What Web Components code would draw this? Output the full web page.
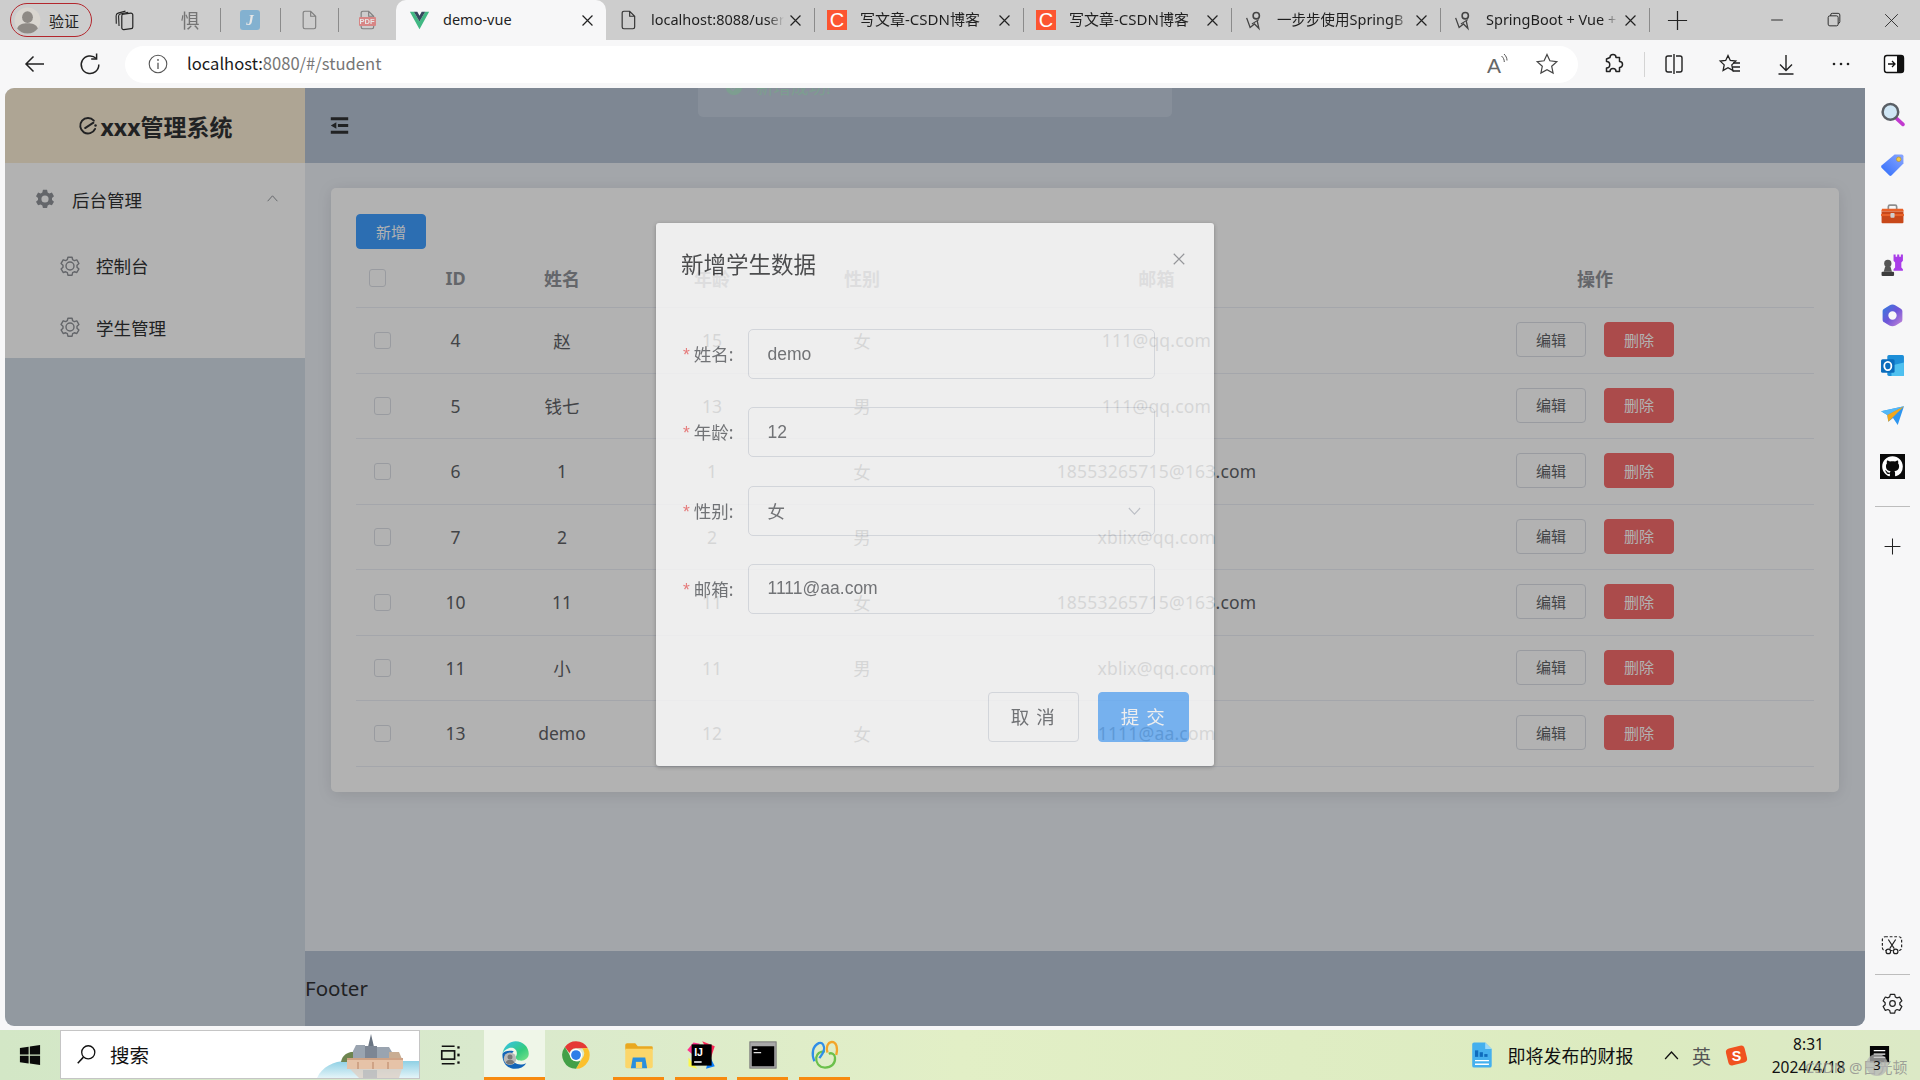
<!DOCTYPE html>
<html lang="zh"><head><meta charset="utf-8"><title>demo-vue</title>
<style>
html,body{margin:0;padding:0;width:1920px;height:1080px;overflow:hidden;background:#f7f7f8}
body{display:flex;flex-direction:column;font-family:"Noto Sans","Noto Sans CJK SC",sans-serif;color:#1a1a1a}
#mid{display:flex;height:938px;flex:none}
#gap{height:4px;flex:none}
</style></head>
<body>
<browser-tabs></browser-tabs>
<browser-toolbar></browser-toolbar>
<div id="mid">
  <admin-app>
    <admin-sidebar slot="aside"></admin-sidebar>
    <admin-header slot="header"></admin-header>
    <student-card slot="main"></student-card>
    <student-dialog slot="overlay"></student-dialog>
  </admin-app>
  <side-panel></side-panel>
</div>
<div id="gap"></div>
<win-taskbar></win-taskbar>
<script>
const ICONS={
back:['0 0 24 24','<path d="M21 12H3M10.5 4.5 3 12l7.5 7.5" fill="none" stroke="#222" stroke-width="1.5"/>'],
reload:['0 0 24 24','<path d="M18.2 6.5A8.8 8.8 0 1 0 20.8 12.5" fill="none" stroke="#222" stroke-width="1.5"/><path d="M18.6 1.5v5.4h-5.4" fill="none" stroke="#222" stroke-width="1.5"/>'],
info:['0 0 24 24','<circle cx="12" cy="12" r="9.6" fill="none" stroke="#555" stroke-width="1.2"/><path d="M12 10.5v7" stroke="#555" stroke-width="1.4"/><circle cx="12" cy="7.5" r="1" fill="#555"/>'],
read:['0 0 24 24','<text x="1" y="20.500" font-family="Liberation Sans" font-size="21" fill="#666">A</text><path d="M15.500 4c1.800 1.500 2.800 3.500 2.800 6M18 2c2 2 3 4 3 6.500" fill="none" stroke="#555"/>'],
star:['0 0 24 24','<path d="M12 2.500l2.900 6.300 6.900.8-5.100 4.700 1.400 6.800-6.100-3.400-6.100 3.400 1.400-6.800L2.200 9.600l6.900-.8z" fill="none" stroke="#444" stroke-width="1.200"/>'],
ext:['0 0 24 24','<path d="M9 5.500a3 3 0 0 1 6 0h3.500v4a3 3 0 0 1 0 6v4H15a3 3 0 0 0-6 0H5.500v-3.500a3 3 0 0 0 0-6.500V7z" fill="none" stroke="#222" stroke-width="1.500" stroke-linejoin="round"/>'],
split:['0 0 24 24','<path d="M10 4H6a2 2 0 0 0-2 2v12a2 2 0 0 0 2 2h4M14 4h4a2 2 0 0 1 2 2v12a2 2 0 0 1-2 2h-4" fill="none" stroke="#222" stroke-width="1.400"/><path d="M12 2v20" stroke="#222" stroke-width="1.400"/>'],
fav:['0 0 24 24','<path d="M10 3.500l2.300 5 5.500.6-4 3.800 1.100 5.500-4.900-2.700-4.900 2.700 1.100-5.500-4-3.800 5.500-.6z" fill="none" stroke="#222" stroke-width="1.300"/><path d="M15 11h7M14.500 15h7.500M14.500 19h7.500" stroke="#222" stroke-width="1.300"/>'],
down:['0 0 24 24','<path d="M12 3v15M6 12.500l6 6 6-6M4.500 22h15" fill="none" stroke="#222" stroke-width="1.400"/>'],
more:['0 0 24 24','<circle cx="5" cy="12" r="1.300" fill="#222"/><circle cx="12" cy="12" r="1.300" fill="#222"/><circle cx="19" cy="12" r="1.300" fill="#222"/>'],
sidebar:['0 0 24 24','<rect x="2.500" y="3.500" width="19" height="17" rx="2.500" fill="#fff" stroke="#111" stroke-width="1.400"/><path d="M15 3.500h4a2.500 2.500 0 0 1 2.500 2.500v12a2.500 2.500 0 0 1-2.500 2.500h-4z" fill="#111"/><path d="M6 12h6M10 9l3 3-3 3" fill="none" stroke="#111" stroke-width="1.300"/>'],
tabs:['0 0 24 24','<path d="M8.500 7.500a2 2 0 0 1 1.800-2l8-1a2 2 0 0 1 2.200 2v13a2 2 0 0 1-1.800 2l-8 1a2 2 0 0 1-2.200-2z" fill="none" stroke="#222" stroke-width="1.300"/><path d="M5.500 18.500 5 8a2.500 2.500 0 0 1 2-2.500L15.500 3.500M2.500 16 2.300 7.500A3 3 0 0 1 4.500 4.500l8-2.200" fill="none" stroke="#222" stroke-width="1.200"/>'],
doc:['0 0 24 24','<path d="M5 3.500a2 2 0 0 1 2-2h7l6 6v13a2 2 0 0 1-2 2H7a2 2 0 0 1-2-2zM14 1.500v6h6" fill="none" stroke="#333" stroke-width="1.400"/>'],
vue:['0 0 24 24','<path d="M1 2h4.500L12 13 18.500 2H23L12 22z" fill="#41b883"/><path d="M5.500 2H9.500L12 6.500 14.500 2h4L12 13z" fill="#35495e"/>'],
person:['0 0 24 24','<circle cx="12" cy="12" r="11.500" fill="#d9d6d0"/><ellipse cx="12" cy="9" rx="4.800" ry="5.300" fill="#8e8a85"/><path d="M2.800 19c1.500-3.500 5-4.500 9.200-4.500s7.700 1 9.200 4.500c-2 2.800-5.300 4.500-9.200 4.500S4.800 21.800 2.800 19z" fill="#8e8a85"/>'],
bird:['0 0 24 24','<path d="M3 9l4 11 5-4 5 5-2-9" fill="none" stroke="#444" stroke-width="1.500"/><circle cx="14" cy="6.500" r="3.600" fill="none" stroke="#444" stroke-width="1.800"/><path d="M9 16l8-5" stroke="#444" stroke-width="1.200"/>'],
x:['0 0 24 24','<path d="M5 5l14 14M19 5 5 19" stroke="#222" stroke-width="1.700"/>'],
xthin:['0 0 24 24','<path d="M4 4l16 16M20 4 4 20" stroke="#222" stroke-width="1.100"/>'],
xd:['0 0 24 24','<path d="M3 3l18 18M21 3 3 21" stroke="#8d8f94" stroke-width="2"/>'],
plus:['0 0 24 24','<path d="M12 2v20M2 12h20" stroke="#222" stroke-width="1.300"/>'],
min:['0 0 24 24','<path d="M5 12h14" stroke="#222" stroke-width="1.100"/>'],
max:['0 0 24 24','<rect x="5" y="7" width="12" height="12" rx="2" fill="none" stroke="#222" stroke-width="1.100"/><path d="M8 7V6a2 2 0 0 1 2-2h7a2 2 0 0 1 2 2v8a2 2 0 0 1-2 2" fill="none" stroke="#222" stroke-width="1.100"/>'],
eleme:['0 0 24 24','<path d="M20.500 15.500A9.300 9.300 0 1 1 19 5.600" fill="none" stroke="#303133" stroke-width="2.300" stroke-linecap="round"/><path d="M8.500 14.500 18.500 8" stroke="#303133" stroke-width="2.300" stroke-linecap="round"/><circle cx="21" cy="11.500" r="1.500" fill="#303133"/>'],
fold:['0 0 24 24','<path d="M1 1.500h22v4H1zM10 10h13v4H10zM1 18.500h22v4H1zM8 8v8L1 12z" fill="#303133"/>'],
gearfill:['0 0 24 24','<path fill-rule="evenodd" fill="#909399" d="M9.500 1h5l.7 3.200 2 1.100 3.100-1 2.500 4.300-2.400 2.200v2.300l2.400 2.200-2.500 4.300-3.100-1-2 1.100-.7 3.200h-5l-.7-3.200-2-1.100-3.100 1L1.200 15.300l2.400-2.200v-2.300L1.200 8.600l2.500-4.300 3.100 1 2-1.100zM12 7.700a4.300 4.300 0 1 0 0 8.600 4.300 4.300 0 0 0 0-8.600z"/>'],
gear:['0 0 24 24','<path fill="none" stroke="#909399" stroke-width="1.700" stroke-linejoin="round" d="M9.500 1.500h5l.7 3 2 1.100 3-.9 2.500 4.300-2.300 2.100v2.300l2.300 2.100-2.500 4.300-3-.9-2 1.100-.7 3h-5l-.7-3-2-1.100-3 .9-2.500-4.300 2.300-2.100v-2.300L1.300 8.900l2.500-4.300 3 .9 2-1.100z"/><circle cx="12" cy="12" r="4.800" fill="none" stroke="#909399" stroke-width="1.700"/>'],
gearblack:['0 0 24 24','<path fill="none" stroke="#222" stroke-width="1.400" stroke-linejoin="round" d="M9.500 1.500h5l.7 3 2 1.100 3-.9 2.500 4.300-2.300 2.100v2.300l2.300 2.100-2.500 4.300-3-.9-2 1.100-.7 3h-5l-.7-3-2-1.100-3 .9-2.500-4.300 2.300-2.100v-2.300L1.300 8.900l2.500-4.300 3 .9 2-1.100z"/><circle cx="12" cy="12" r="3.200" fill="none" stroke="#222" stroke-width="1.400"/>'],
up:['0 0 24 24','<path d="M3 17 12 7l9 10" fill="none" stroke="#909399" stroke-width="1.800"/>'],
downc:['0 0 24 24','<path d="M3 8l9 10 9-10" fill="none" stroke="#c0c4cc" stroke-width="1.800"/>'],
check:['0 0 24 24','<circle cx="12" cy="12" r="11" fill="#7d9e90"/><path d="M6.500 12.500l4 4 7-8" fill="none" stroke="#8a949d" stroke-width="2"/>'],
mag:['0 0 24 24','<path d="M15 15l7 6.500" stroke="#c23ad0" stroke-width="3.500" stroke-linecap="round"/><circle cx="10" cy="9.500" r="7.500" fill="#cfe6f5" stroke="#5a5f66" stroke-width="2.400"/>'],
tag:['0 0 24 24','<defs><linearGradient id="tg" x1="0" y1="1" x2="1" y2="0"><stop offset="0" stop-color="#2f6dfb"/><stop offset="1" stop-color="#8aa6ff"/></linearGradient></defs><path d="M14 2.500h7a1.500 1.500 0 0 1 1.500 1.500v7L11 22.500a1.500 1.500 0 0 1-2 0L1.500 15a1.500 1.500 0 0 1 0-2z" fill="url(#tg)"/><circle cx="18" cy="7" r="2.200" fill="#f2c94c" stroke="#b69323" stroke-width=".6"/>'],
box:['0 0 24 24','<path d="M8 7V4.500a1.500 1.500 0 0 1 1.500-1.500h5A1.500 1.500 0 0 1 16 4.500V7" fill="none" stroke="#8e8e8e" stroke-width="1.600"/><path d="M1 9l1-2.500h20l1 2.500z" fill="#e8622a"/><rect x="1.500" y="9" width="21" height="11.500" rx="1" fill="#c8481a"/><rect x="1" y="11.500" width="22" height="2" fill="#e8622a"/><rect x="10" y="10.500" width="4" height="4.500" rx=".8" fill="#cfcfcf"/>'],
chess:['0 0 24 24','<circle cx="7.500" cy="10" r="3.500" fill="#565656"/><path d="M5 13h5l1.500 5h-8z" fill="#565656"/><rect x="1.500" y="18" width="12" height="4" rx="1" fill="#3d3d3d"/><path d="M13 1.500h2v2h1.500v-2h2v2H20v-2h2v6l-1.500 1.500v5l1.500 1.500v1.500h-9V15.500l1.500-1.500V9L13 7.500z" fill="#a93de8"/>'],
m365:['0 0 24 24','<defs><linearGradient id="mg" x1="0" y1="0" x2="1" y2="1"><stop offset="0" stop-color="#2f7fe0"/><stop offset=".5" stop-color="#6e55d8"/><stop offset="1" stop-color="#c888d8"/></linearGradient></defs><path fill-rule="evenodd" d="M12 1.500c1 0 2 .5 3 1l5 3c1 .6 1.500 1.500 1.500 2.500v8c0 1-.5 2-1.500 2.500l-5 3c-2 1-4 1-6 0l-5-3c-1-.5-1.500-1.500-1.500-2.500V8c0-1 .5-2 1.500-2.500l5-3c1-.5 2-1 3-1zM12 8a4 4 0 1 0 0 8 4 4 0 0 0 0-8z" fill="url(#mg)"/>'],
outlook:['0 0 24 24','<rect x="7" y="2" width="16" height="20" rx="1.500" fill="#1d8fd8"/><path d="M11 12l12-3v13H11z" fill="#4fc1f0"/><rect x="1" y="6" width="13" height="13" rx="1.500" fill="#0a6cbc"/><ellipse cx="7.500" cy="12.500" rx="3.400" ry="4" fill="none" stroke="#fff" stroke-width="1.700"/>'],
plane:['0 0 24 24','<path d="M1 8 23 3 17 21l-4.500-6.500L8 18l-1-6.500z" fill="#2f96ef"/><path d="M1 8l22-5L7 11.500z" fill="#54b8f7"/><path d="M8 18l-1-6.500L23 3z" fill="#f2a71b"/>'],
github:['0 0 16 16','<rect width="16" height="16" fill="#0a0a0a"/><g transform="translate(1.400 1.400) scale(.825)"><path fill="#fff" d="M8 0C3.580 0 0 3.580 0 8c0 3.540 2.290 6.530 5.470 7.590.4.070.55-.170.55-.380 0-.190-.010-.820-.010-1.490-2.010.370-2.530-.490-2.690-.940-.090-.230-.480-.940-.820-1.130-.280-.150-.680-.520-.010-.530.630-.010 1.080.580 1.230.820.720 1.210 1.870.870 2.330.660.070-.520.280-.870.510-1.070-1.780-.200-3.640-.890-3.640-3.950 0-.870.310-1.590.820-2.150-.080-.200-.360-1.020.080-2.120 0 0 .670-.210 2.200.820.640-.180 1.320-.270 2-.270s1.360.090 2 .270c1.530-1.040 2.200-.820 2.200-.820.440 1.100.160 1.920.080 2.120.510.560.820 1.270.820 2.150 0 3.070-1.870 3.750-3.650 3.950.290.250.540.730.540 1.480 0 1.070-.010 1.930-.010 2.200 0 .210.150.460.550.380A8.010 8.010 0 0 0 16 8c0-4.420-3.580-8-8-8z"/></g>'],
scissors:['0 0 24 24','<rect x="1.500" y="3" width="21" height="15" rx="3" fill="none" stroke="#222" stroke-width="1.300" stroke-dasharray="3 2"/><path d="M8 6l6.500 10M16 6 9.500 16" stroke="#222" stroke-width="1.300"/><circle cx="8" cy="19" r="2.500" fill="#f7f7f8" stroke="#222" stroke-width="1.300"/><circle cx="16" cy="19" r="2.500" fill="#f7f7f8" stroke="#222" stroke-width="1.300"/>'],
win:['0 0 24 24','<path d="M1 4.300l9.500-1.400v8.500H1zM11.800 2.700 23 1v10.400H11.800zM1 12.700h9.500v8.500L1 19.800zM11.800 12.700H23V23l-11.200-1.700z" fill="#0a0a0a"/>'],
search:['0 0 24 24','<circle cx="14" cy="9.500" r="7.500" fill="none" stroke="#111" stroke-width="1.500"/><path d="M8.500 15 2 22" stroke="#111" stroke-width="1.700"/>'],
taskview:['0 0 24 24','<path d="M3 2.500h14M3 21.500h14" stroke="#111" stroke-width="1.800"/><rect x="3" y="7.500" width="14" height="9" fill="none" stroke="#111" stroke-width="1.800"/><rect x="20" y="2.500" width="2.500" height="2.500" fill="#111"/><rect x="20" y="10.500" width="2.500" height="3" fill="#111"/><rect x="20" y="19" width="2.500" height="2.500" fill="#111"/>'],
edge:['0 0 24 24','<defs><linearGradient id="eg" x1="0" y1="0" x2="1" y2="1"><stop offset="0" stop-color="#35c1f1"/><stop offset=".6" stop-color="#33cc7f"/><stop offset="1" stop-color="#7de38a"/></linearGradient></defs><path d="M2 11C3 4.500 8 1 12.500 1 18.500 1 23 5.500 23 11c0 3.500-3 5.500-6 5.500-2.500 0-4.500-1-4.500-2.500 0-1 1-1.500 1-3.500C13.500 7 10 5.500 7 6.500 4.500 7.500 2.500 9 2 11z" fill="url(#eg)"/><path d="M2 11c-.5 6 3 12 10 12 4 0 7-1.500 9-4.500-3 1.500-7 1.500-9.500-.5C8 15.500 8 11.500 11 9 7 8 3 9 2 11z" fill="#1265b8"/><circle cx="8" cy="15" r="5" fill="#b9b9b9"/><circle cx="8" cy="13.500" r="2" fill="#777"/><path d="M4.500 18c.8-1.800 2-2.300 3.500-2.300s2.700.5 3.500 2.300c-1 1-2.200 1.500-3.500 1.500s-2.500-.5-3.500-1.500z" fill="#777"/>'],
chrome:['0 0 24 24','<path d="M12 1a11 11 0 0 1 9.500 5.500H12A5.500 5.500 0 0 0 6.800 10.300L3.100 5.500A11 11 0 0 1 12 1z" fill="#e53935"/><path d="M21.500 6.500A11 11 0 0 1 12 23l5-8.500a5.500 5.500 0 0 0-.2-8z" fill="#fbc02d"/><path d="M3.100 5.500l5 8.500a5.500 5.500 0 0 0 7.500 2.500L12 23A11 11 0 0 1 3.100 5.500z" fill="#43a047"/><circle cx="12" cy="12" r="5" fill="#fff"/><circle cx="12" cy="12" r="3.900" fill="#2f7ee8"/>'],
folder:['0 0 24 24','<path d="M1 4a1.500 1.500 0 0 1 1.500-1.500H9L11 5h11a1 1 0 0 1 1 1v2H1z" fill="#e9a820"/><path d="M1 7h22v14a1.500 1.500 0 0 1-1.500 1.500h-19A1.500 1.500 0 0 1 1 21z" fill="#fbd66a"/><path d="M7 14h10l1.500 8.500h-13z" fill="#2a8fde"/><rect x="9.500" y="17.500" width="5" height="5" fill="#fbd66a"/>'],
ij:['0 0 24 24','<path d="M1 8 6 2l5 1-4 10z" fill="#ff318c"/><path d="M13 1l10 4-3 9z" fill="#fe2857"/><path d="M2 14l7 9-7-2z" fill="#fcf84a"/><path d="M19 13l4 8-7 2z" fill="#087cfa"/><rect x="4.500" y="3.500" width="16" height="17" fill="#000"/><text x="6.500" y="12.500" font-family="Liberation Sans" font-weight="700" font-size="8.500" fill="#fff">IJ</text><rect x="6.500" y="17" width="6" height="1.200" fill="#fff"/>'],
term:['0 0 24 24','<rect x="1.500" y="1.500" width="21" height="21" fill="#a8a8a8" stroke="#777" stroke-width=".8"/><rect x="3" y="5" width="18" height="16" fill="#000"/><path d="M4.500 7.500h3M4.500 10h6" stroke="#ddd"/>'],
navicat:['0 0 24 24','<path d="M12 22c-5 0-7.500-4-7-8 .5-3 3-5 7-5" fill="none" stroke="#6bc04b" stroke-width="1.800"/><path d="M12 22c5 0 8.500-3 8-8-.3-3-3-4-5-3" fill="none" stroke="#6bc04b" stroke-width="1.800"/><path d="M3.500 17C1 11 2 5 7 2.500c3-1 5 2 4 6-.7 3-3 5-3.500 6" fill="none" stroke="#2f8ee8" stroke-width="1.800"/><path d="M14 10c-1.500-4 0-8 3.500-8.500C21 1.500 22.500 6 21 12" fill="none" stroke="#f2a52a" stroke-width="1.800"/>'],
news:['0 0 24 28','<path d="M2 2.500A2 2 0 0 1 4 .5h12l7 7v18a2 2 0 0 1-2 2H4a2 2 0 0 1-2-2z" fill="#45b0ee"/><path d="M16 .5l7 7h-7z" fill="#9bd9fa"/><rect x="5" y="9" width="3.500" height="7" fill="#0f6cbd"/><rect x="10" y="11" width="3.500" height="5" fill="#0f6cbd"/><rect x="15" y="13" width="3.500" height="3" fill="#0f6cbd"/><path d="M5 20h15M5 24h15" stroke="#fff" stroke-width="1.500"/>'],
caret:['0 0 24 24','<path d="M3 17 12 7l9 10" fill="none" stroke="#111" stroke-width="1.800"/>'],
sogou:['0 0 24 24','<rect x="2" y="3" width="20" height="18" rx="4" fill="#f0521f" transform="rotate(-14 12 12)"/><text x="12" y="17.500" text-anchor="middle" font-family="Liberation Sans" font-weight="700" font-size="15" fill="#fff">S</text>'],
notice:['0 0 24 24','<path d="M2 2h20v17h-8l-3 3v-3H2z" fill="#050505"/><path d="M6 7h12M6 10.500h12M6 14h12" stroke="#fff" stroke-width="1.300"/>'],
scene:['0 0 102 49','<defs><linearGradient id="sw" x1="0" y1="0" x2="0" y2="1"><stop offset="0" stop-color="#8fd0e4"/><stop offset="1" stop-color="#e4f4f8"/></linearGradient></defs><path d="M0 49C5 38 16 32 30 32h72v17z" fill="url(#sw)"/><path d="M24 33c1-6 5-9 10-10l16-1v11z" fill="#6e8550"/><path d="M54 5l-3 13h6z" fill="#6a7482"/><rect x="48" y="17" width="12" height="13" fill="#7d8694"/><path d="M36 22l3-6h9v14H36zM60 18h12l3 5v7H60z" fill="#9aa4b0"/><path d="M72 23h10l3 7H72z" fill="#c9ad93"/><rect x="30" y="29" width="56" height="11" fill="#e6c3a8"/><path d="M30 29h56v2H30zM40 33h2v7h-2zM55 33h2v7h-2zM70 33h2v7h-2z" fill="#cfa386"/><path d="M33 40h52l-3 9H42z" fill="#dfcfc4" opacity=".8"/><path d="M46 41h14v8H46z" fill="#a9b1b8" opacity=".55"/>']
};
function icon(n,w,h){const i=ICONS[n];h=h||w;return `<svg viewBox="${i[0]}" width="${w}" height="${h}" style="display:block;flex:none" aria-hidden="true">${i[1]}</svg>`}

class BrowserTabs extends HTMLElement{constructor(){super();const tab=(ic,t,w,act,fs)=>`<div class="tab ${act?'act':''}" style="width:${w}px"><span class="ic">${ic}</span><span class="lb" ${fs?`style="font-size:${fs}px"`:''}>${t}</span><span class="cl">${icon('x',17)}</span></div>`;
const csdn='<span class="csdn">C</span>';
this.attachShadow({mode:'open'}).innerHTML=`<style>
:host{display:flex;height:40px;flex:none;background:#cdcdcd;font:14.5px "Noto Sans","Noto Sans CJK SC",sans-serif;color:#1f1f1f;align-items:stretch;overflow:hidden}
.pill{box-sizing:border-box;margin:3px 0 0 10px;width:82px;height:34px;border:1.5px solid #b3272d;border-radius:17px;display:flex;align-items:center;padding-left:3px;gap:8px;font-size:15px;color:#222}
.cell{display:flex;align-items:center;justify-content:center;flex:none;position:relative}
.sep{width:1px;height:24px;background:#8b8b8b;align-self:center;flex:none}
.fade{opacity:.5}
.tab{box-sizing:border-box;display:flex;align-items:center;flex:none;padding-left:12px;position:relative}
.tab.act{background:#f7f7f8;border-radius:10px 10px 0 0;padding-left:13px}
.ic{width:20px;height:20px;flex:none;display:flex;align-items:center;justify-content:center}
.lb{margin-left:13px;flex:1;min-width:0;white-space:nowrap;overflow:hidden;line-height:20px;padding-bottom:2px;-webkit-mask-image:linear-gradient(90deg,#000 88%,transparent)}
.act .lb{margin-left:14px;-webkit-mask-image:none}
.cl{flex:none;margin:0 10px 0 3px}
.act .cl{margin-left:12px}
.csdn{width:20px;height:20px;background:#fc5531;color:#fff;font:20px/20px "Liberation Sans";text-align:center;display:block}
.j{width:20px;height:20px;border-radius:3px;background:#3c97d3;color:#fff;font:italic 700 15px/20px "Liberation Serif";text-align:center}
.pdf{font:700 7.500px/9px "Liberation Sans";background:#e2413f;color:#fff;padding:0 1px;margin-top:3px;border-radius:1px;position:relative}
.plus{width:55px}
.sp{flex:1}
</style>
<div class="pill">${icon('person',27)}<span>验证</span></div>
<div class="cell" style="width:33px;margin-left:16px">${icon('tabs',22)}</div>
<div class="cell fade" style="width:22px;margin-left:38px;font-size:19px">惧</div>
<div class="sep" style="margin-left:19px"></div>
<div class="cell fade" style="width:20px;margin-left:19px"><span class="j">J</span></div>
<div class="sep" style="margin-left:20px"></div>
<div class="cell fade" style="width:20px;margin-left:18px">${icon('doc',20)}</div>
<div class="sep" style="margin-left:19px"></div>
<div class="cell fade" style="width:20px;margin-left:18px"><span style="position:absolute;left:0;top:10px">${icon('doc',20)}</span><span class="pdf">PDF</span></div>
<div style="width:19px;flex:none"></div>
${tab(icon('vue',21),'demo-vue',210,true)}
${tab(icon('doc',20),'localhost:8088/user',208)}<div class="sep"></div>
${tab(csdn,'写文章-CSDN博客',208,0,15)}<div class="sep"></div>
${tab(csdn,'写文章-CSDN博客',207,0,15)}<div class="sep"></div>
${tab(icon('bird',21),'一步步使用SpringB',208)}<div class="sep"></div>
${tab(icon('bird',21),'SpringBoot + Vue +',208)}<div class="sep"></div>
<div class="cell plus">${icon('plus',23)}</div>
<div class="sp"></div>
<div class="cell" style="width:57px">${icon('min',20)}</div>
<div class="cell" style="width:57px">${icon('max',20)}</div>
<div class="cell" style="width:58px">${icon('xthin',19)}</div>`;}}
customElements.define('browser-tabs',BrowserTabs);

class BrowserToolbar extends HTMLElement{constructor(){super();
this.attachShadow({mode:'open'}).innerHTML=`<style>
:host{display:flex;height:48px;flex:none;background:#f7f7f8;align-items:center;box-sizing:border-box}
.b{display:flex;flex:none;align-items:center;justify-content:center}
.addr{box-sizing:border-box;margin-left:23px;width:1453px;height:37px;border-radius:19px;background:#fff;display:flex;align-items:center;padding-left:22px}
.url{margin-left:18px;font:16.600px "Noto Sans CJK SC","Noto Sans",sans-serif;color:#767676;padding-bottom:2px}
.url b{font-weight:400;color:#1a1a1a}
.sp{flex:1}
.sep{width:1px;height:25px;background:#d4d4d4;margin-left:19px;flex:none}
</style>
<span class="b" style="margin-left:23px">${icon('back',24)}</span>
<span class="b" style="margin-left:31px">${icon('reload',24)}</span>
<div class="addr">${icon('info',22)}<span class="url"><b>localhost:</b>8080/#/student</span><span class="sp"></span>${icon('read',24)}<span style="width:25px"></span>${icon('star',24)}<span style="width:19px"></span></div>
<span class="b" style="margin-left:23px">${icon('ext',24)}</span>
<span class="sep"></span>
<span class="b" style="margin-left:17px">${icon('split',24)}</span>
<span class="b" style="margin-left:32px">${icon('fav',24)}</span>
<span class="b" style="margin-left:32px">${icon('down',24)}</span>
<span class="b" style="margin-left:31px">${icon('more',24)}</span>
<span class="b" style="margin-left:29px">${icon('sidebar',24)}</span>`;}}
customElements.define('browser-toolbar',BrowserToolbar);

class AdminApp extends HTMLElement{constructor(){super();
this.attachShadow({mode:'open'}).innerHTML=`<style>
:host{display:flex;position:relative;width:1860px;margin-left:5px;flex:none;height:938px;overflow:hidden;border-radius:9px 0 9px 9px;background:#eaeef4;font:17.5px "Noto Sans","Noto Sans CJK SC",sans-serif;color:#303133}
.aside{width:300px;flex:none;background:#d2dce6;display:flex;flex-direction:column}
.col{flex:1;min-width:0;display:flex;flex-direction:column}
.main{flex:1;min-height:0;background:#eaeef4;padding:25px 26px;box-sizing:border-box}
.foot{height:75px;flex:none;background:#b5c2d3;display:flex;align-items:center;font-size:20.500px;color:#303133;box-sizing:border-box;padding-bottom:1px}
.mask{position:absolute;inset:0;background:rgba(0,0,0,.3)}
.toast{position:absolute;left:693px;top:-33px;width:474px;height:62px;box-sizing:border-box;background:rgba(255,255,255,.07);border-radius:5px;display:flex;align-items:flex-end;padding:0 0 21px 27px;gap:13px;color:#7d9e90;font-size:17.5px}
</style>
<div class="aside"><slot name="aside"></slot></div>
<div class="col"><slot name="header"></slot><div class="main"><slot name="main"></slot></div><div class="foot">Footer</div></div>
<div class="mask"></div>
<div class="toast">${icon('check',18)}<span style="line-height:18px">新增成功!</span></div>
<slot name="overlay"></slot>`;}}
customElements.define('admin-app',AdminApp);

class AdminSidebar extends HTMLElement{constructor(){super();
this.attachShadow({mode:'open'}).innerHTML=`<style>
:host{display:block;color:#303133}
.logo{height:75px;background:#f9ecd5;display:flex;align-items:center;justify-content:center;font-size:23px;font-weight:700;gap:3px}
.menu{background:#fff;height:195px;display:flex;flex-direction:column}
.t{height:72px;display:flex;align-items:center;padding-left:30px;position:relative}
.t span{margin-left:17px}
.up{position:absolute;right:26px;top:29px}
.i{height:61.5px;display:flex;align-items:center;padding-left:55px}
.i span{margin-left:16px}
</style>
<div class="logo">${icon('eleme',20)}<span>xxx管理系统</span></div>
<div class="menu">
<div class="t">${icon('gearfill',20)}<span>后台管理</span><i class="up">${icon('up',13)}</i></div>
<div class="i">${icon('gear',20)}<span>控制台</span></div>
<div class="i">${icon('gear',20)}<span>学生管理</span></div>
</div>`;}}
customElements.define('admin-sidebar',AdminSidebar);

class AdminHeader extends HTMLElement{constructor(){super();
this.attachShadow({mode:'open'}).innerHTML=`<style>:host{display:flex;height:75px;flex:none;background:#b5c2d3;align-items:center;padding-left:25px;box-sizing:border-box}</style>${icon('fold',19)}`;}}
customElements.define('admin-header',AdminHeader);

class UiButton extends HTMLElement{
constructor(){super();this.attachShadow({mode:'open'}).innerHTML=`<style>
:host{display:inline-flex;align-items:center;justify-content:center;box-sizing:border-box;height:35px;width:70px;border-radius:4px;font-size:15px;border:1.25px solid #dcdfe6;background:#fff;color:#606266;flex:none;padding-bottom:1px}
:host([kind=primary]){background:#409eff;border-color:#409eff;color:#fff}
:host([kind=danger]){background:#f56c6c;border-color:#f56c6c;color:#fff}
:host([kind=soft]){background:#66b1ff;border-color:#66b1ff;color:#fff}
:host([big]){height:50px;width:91.500px;font-size:18.500px;letter-spacing:1px;padding-bottom:2px}
</style><slot></slot>`}}
customElements.define('ui-button',UiButton);

class StudentRow extends HTMLElement{constructor(){super();const a=k=>this.getAttribute(k)||'';const head=this.hasAttribute('head');
this.attachShadow({mode:'open'}).innerHTML=`<style>
:host{display:grid;grid-template-columns:68px 63px 150px 150px 150px 439px 438px;height:65.5px;box-sizing:border-box;border-bottom:1.25px solid #ebeef5;align-items:center;text-align:center;color:#606266;font-size:17.5px}
:host([head]){height:59px;font-weight:700;color:#909399;font-size:18px}
.cb{box-sizing:border-box;width:17px;height:17.500px;border:1.25px solid #dcdfe6;border-radius:3px;background:#fff;margin-left:18px}
:host([head]) .cb{margin-left:13px}
.op{display:flex;justify-content:center;gap:18px;margin-top:-1px}
.mail{letter-spacing:.2px}
</style><div><div class="cb"></div></div><div>${a('sid')}</div><div>${a('name')}</div><div>${a('age')}</div><div>${a('sex')}</div><div class="mail">${a('mail')}</div>
<div class="op">${head?'操作':'<ui-button>编辑</ui-button><ui-button kind="danger">删除</ui-button>'}</div>`;}}
customElements.define('student-row',StudentRow);

class StudentCard extends HTMLElement{constructor(){super();
const rows=[[4,'赵',15,'女','111@qq.com'],[5,'钱七',13,'男','111@qq.com'],[6,'1',1,'女','18553265715@163.com'],[7,'2',2,'男','xblix@qq.com'],[10,'11',11,'女','18553265715@163.com'],[11,'小',11,'男','xblix@qq.com'],[13,'demo',12,'女','1111@aa.com']];
this.attachShadow({mode:'open'}).innerHTML=`<style>
:host{display:block;background:#fff;border-radius:5px;padding:26px 25px 25px;box-shadow:0 2.500px 15px rgba(0,0,0,.1)}
</style>
<ui-button kind="primary">新增</ui-button>
<student-row head sid="ID" name="姓名" age="年龄" sex="性别" mail="邮箱"></student-row>
${rows.map(r=>`<student-row sid="${r[0]}" name="${r[1]}" age="${r[2]}" sex="${r[3]}" mail="${r[4]}"></student-row>`).join('')}`;}}
customElements.define('student-card',StudentCard);

class FormItem extends HTMLElement{constructor(){super();
this.attachShadow({mode:'open'}).innerHTML=`<style>
:host{display:flex;align-items:center;height:50px;margin-bottom:28.300px;font-size:17.500px;color:#606266}
.l{width:66.500px;flex:none;box-sizing:border-box;padding-right:14px;text-align:right;white-space:nowrap;padding-bottom:1px}
.l i{color:#f56c6c;font-style:normal;margin-right:4px;font-family:"Liberation Sans"}
.f{box-sizing:border-box;width:407px;height:50px;border:1.25px solid #dcdfe6;border-radius:5px;display:flex;align-items:center;justify-content:space-between;padding:0 12px 0 19px;font-family:"Liberation Sans","Noto Sans CJK SC",sans-serif;color:#606266}
</style><div class="l"><i>*</i>${this.getAttribute('label')}:</div><div class="f"><slot></slot></div>`;}}
customElements.define('form-item',FormItem);

class StudentDialog extends HTMLElement{constructor(){super();
this.attachShadow({mode:'open'}).innerHTML=`<style>
:host{position:absolute;left:651px;top:135px;width:558px;height:543px;box-sizing:border-box;background:#fff;opacity:.78;border-radius:3px;box-shadow:0 1px 4px rgba(0,0,0,.35);padding:25px 25px 0;display:flex;flex-direction:column;color:#303133}
.hd{display:flex;justify-content:space-between;align-items:flex-start;height:81px;font-size:22.5px;line-height:34px}
.hd i{margin:4px 3px 0 0}
.ft{display:flex;justify-content:flex-end;gap:18.500px;margin-top:50px}
</style>
<div class="hd"><span>新增学生数据</span><i>${icon('xd',14)}</i></div>
<form-item label="姓名">demo</form-item>
<form-item label="年龄">12</form-item>
<form-item label="性别"><span>女</span>${icon('downc',15)}</form-item>
<form-item label="邮箱">1111@aa.com</form-item>
<div class="ft"><ui-button big>取 消</ui-button><ui-button big kind="soft">提 交</ui-button></div>`;}}
customElements.define('student-dialog',StudentDialog);

class SidePanel extends HTMLElement{constructor(){super();
const it=n=>`<div class="c">${icon(n,25)}</div>`;
this.attachShadow({mode:'open'}).innerHTML=`<style>
:host{display:flex;flex-direction:column;width:54px;margin-right:1px;flex:none;background:#f7f7f8;align-items:center;padding-top:1px;box-sizing:border-box}
.c{height:50.300px;width:100%;display:flex;align-items:center;justify-content:center;flex:none}
.l{width:35px;height:1px;background:#bdbdbd;flex:none}
.sp{flex:1}
</style>${['mag','tag','box','chess','m365','outlook','plane','github'].map(it).join('')}
<div class="l" style="margin-top:15px"></div>
<div class="c" style="margin-top:14px;height:50px">${icon('plus',19)}</div><div class="sp"></div>
<div class="c" style="height:32px">${icon('scissors',22)}</div>
<div class="l" style="margin-top:13px"></div>
<div class="c" style="height:46px;margin-top:5px">${icon('gearblack',21)}</div>`;}}
customElements.define('side-panel',SidePanel);

class WinTaskbar extends HTMLElement{constructor(){super();
const app=(n,w,on,act)=>`<div class="app ${act?'act':''}" style="width:${w}px">${icon(n,30)}${on?'<i></i>':''}</div>`;
this.attachShadow({mode:'open'}).innerHTML=`<style>
:host{display:flex;height:50px;flex:none;position:relative;background:linear-gradient(90deg,#d3e7c6,#d9e9cd 25%,#e2efc6 50%,#dcebc0 85%,#dce9c6);font:19.500px "Noto Sans CJK SC","Noto Sans",sans-serif;color:#111;align-items:stretch;box-sizing:border-box}
.win{width:60px;flex:none;display:flex;align-items:center;justify-content:center}
.search{box-sizing:border-box;width:360px;height:49px;flex:none;background:#fff;border:1px solid #c5c5c5;display:flex;align-items:center;padding-left:15px;gap:13px;position:relative;overflow:hidden}
.search svg:last-child{position:absolute;right:0;bottom:0}
.app{display:flex;align-items:center;justify-content:center;flex:none;position:relative}
.app.act{background:#eff6e8}
.app i{position:absolute;left:0;right:0;bottom:0;height:3px;background:#f78a10}
.tv{width:60px;flex:none;display:flex;align-items:center;justify-content:center;box-sizing:border-box;margin-right:4px}
.sp{flex:1}
.c{flex:none;display:flex;align-items:center;justify-content:center}
.clock{width:80px;flex:none;text-align:center;font:15.500px/23px "Noto Sans",sans-serif;padding-top:3px;margin-left:12px}
.wm{position:absolute;left:1805px;top:25px;font:15px/24px "Noto Sans","Noto Sans CJK SC",sans-serif;color:rgba(140,140,140,.8);white-space:nowrap}
.badge{position:absolute;left:1866px;top:24px;width:22px;height:22px;border-radius:50%;background:rgba(180,180,180,.75);color:#111;font:13px/22px "Noto Sans";text-align:center}
</style>
<div class="win">${icon('win',22)}</div>
<div class="search">${icon('search',21)}<span>搜索</span>${icon('scene',102,49)}</div>
<div class="tv">${icon('taskview',22)}</div>
${app('edge',61,1,1)}${app('chrome',62)}
<div style="width:6px"></div>${app('folder',51,1)}
<div style="width:11px"></div>${app('ij',52,1)}
<div style="width:10px"></div>${app('term',51,1)}
<div style="width:11px"></div>${app('navicat',51,1)}
<span class="sp"></span>
<div class="c" style="width:24px">${icon('news',23,26)}</div>
<div style="width:14px"></div>
<span class="c" style="font-size:18px;width:126px;padding-bottom:1px">即将发布的财报</span>
<div class="c" style="width:30px;margin-left:23px">${icon('caret',17)}</div>
<div class="c" style="width:30px;font-size:19px;color:#555">英</div>
<div class="c" style="width:40px">${icon('sogou',23)}</div>
<div class="clock">8:31<br>2024/4/18</div>
<div class="c" style="width:25px;margin-left:18.500px;margin-right:28px">${icon('notice',23)}</div>
<span class="wm">CSDN @日光顿</span>
<span class="badge">3</span>`;}}
customElements.define('win-taskbar',WinTaskbar);
</script>
</body></html>
